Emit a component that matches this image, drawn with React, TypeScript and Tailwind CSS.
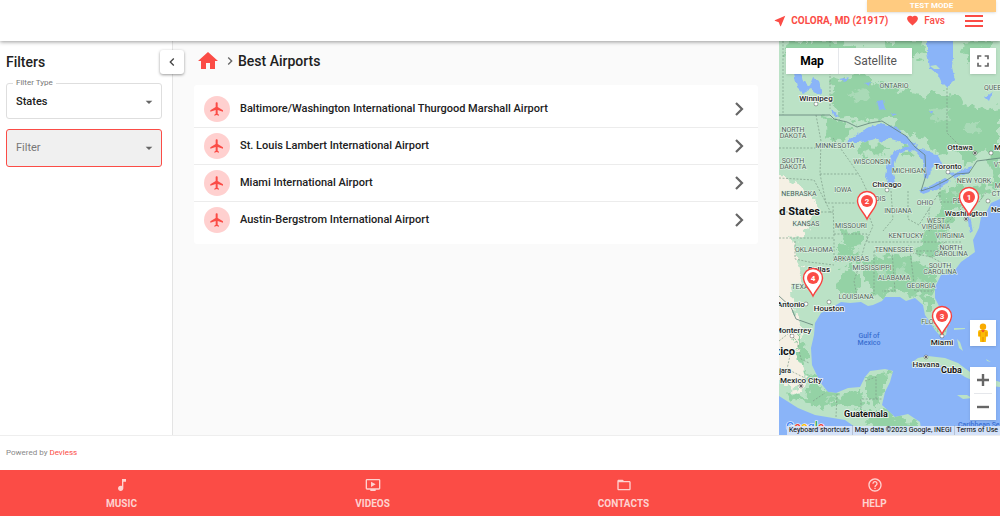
import { useState } from 'react';
import {
  MdArrowDropDown,
  MdChevronLeft,
  MdChevronRight,
  MdFavorite,
  MdFlight,
  MdFolderOpen,
  MdFullscreen,
  MdHelpOutline,
  MdHome,
  MdMusicNote,
  MdNearMe,
  MdOndemandVideo,
} from 'react-icons/md';

const airports = [
  'Baltimore/Washington International Thurgood Marshall Airport',
  'St. Louis Lambert International Airport',
  'Miami International Airport',
  'Austin-Bergstrom International Airport',
];

const navItems = [
  { label: 'MUSIC', Icon: MdMusicNote },
  { label: 'VIDEOS', Icon: MdOndemandVideo },
  { label: 'CONTACTS', Icon: MdFolderOpen },
  { label: 'HELP', Icon: MdHelpOutline },
];

const pins = [
  { id: 1, x: 190, y: 174 },
  { id: 2, x: 88, y: 178 },
  { id: 3, x: 163, y: 293 },
  { id: 4, x: 34, y: 255 },
];

const regions = [
  { name: 'ONTARIO', x: 115, y: 47 },
  { name: 'QUEBEC', x: 218, y: 49 },
  { name: 'NORTH', x: 14, y: 91 },
  { name: 'DAKOTA', x: 14, y: 97 },
  { name: 'MINNESOTA', x: 56, y: 107 },
  { name: 'WISCONSIN', x: 93, y: 123 },
  { name: 'SOUTH', x: 14, y: 122 },
  { name: 'DAKOTA', x: 14, y: 128 },
  { name: 'MICHIGAN', x: 130, y: 132 },
  { name: 'NEW YORK', x: 195, y: 142 },
  { name: 'VT', x: 219, y: 126 },
  { name: 'MA', x: 221, y: 147 },
  { name: 'CT', x: 217, y: 155 },
  { name: 'IOWA', x: 64, y: 151 },
  { name: 'NEBRASKA', x: 20, y: 155 },
  { name: 'OHIO', x: 146, y: 164 },
  { name: 'ILLINOIS', x: 93, y: 160 },
  { name: 'INDIANA', x: 119, y: 172 },
  { name: 'PENN', x: 183, y: 162 },
  { name: 'KANSAS', x: 27, y: 185 },
  { name: 'MISSOURI', x: 72, y: 187 },
  { name: 'WEST', x: 157, y: 182 },
  { name: 'VIRGINIA', x: 157, y: 188 },
  { name: 'KENTUCKY', x: 127, y: 197 },
  { name: 'VIRGINIA', x: 171, y: 197 },
  { name: 'OKLAHOMA', x: 35, y: 211 },
  { name: 'TENNESSEE', x: 115, y: 211 },
  { name: 'NORTH', x: 172, y: 209 },
  { name: 'CAROLINA', x: 172, y: 215 },
  { name: 'ARKANSAS', x: 72, y: 220 },
  { name: 'MISSISSIPPI', x: 93, y: 229 },
  { name: 'SOUTH', x: 161, y: 227 },
  { name: 'CAROLINA', x: 161, y: 233 },
  { name: 'ALABAMA', x: 115, y: 239 },
  { name: 'GEORGIA', x: 142, y: 247 },
  { name: 'TEXAS', x: 23, y: 248 },
  { name: 'LOUISIANA', x: 77, y: 258 },
  { name: 'FLORIDA', x: 156, y: 283 },
];

const cities = [
  { name: 'Winnipeg', x: 37, y: 60, dotX: 37, dotY: 63, capital: false },
  { name: 'Ottawa', x: 181, y: 109, dotX: 196, dotY: 112, capital: true },
  { name: 'Montreal', x: 231, y: 109, dotX: 212, dotY: 112, capital: false },
  { name: 'Toronto', x: 169, y: 128, dotX: 169, dotY: 131, capital: false },
  { name: 'Chicago', x: 108, y: 146, dotX: 108, dotY: 149, capital: false },
  { name: 'New York', x: 229, y: 171, dotX: 209, dotY: 160, capital: false },
  { name: 'Washington', x: 187, y: 175, dotX: 187, dotY: 178, capital: true },
  { name: 'Dallas', x: 40, y: 231, dotX: 31, dotY: 234, capital: false },
  { name: 'Antonio', x: 12, y: 266, dotX: 27, dotY: 263, capital: false },
  { name: 'Houston', x: 50, y: 270, dotX: 50, dotY: 261, capital: false },
  { name: 'Monterrey', x: 14, y: 292, dotX: 13, dotY: 295, capital: false },
  { name: 'Miami', x: 163, y: 304, dotX: 163, dotY: 295, capital: false },
  { name: 'Havana', x: 147, y: 326, dotX: 147, dotY: 316, capital: true },
  { name: 'Mexico City', x: 22, y: 342, dotX: 22, dotY: 345, capital: true },
];

const stateLines = [
  'M4 0 V74 M51 0 V68 M168 47 V92 L181 105',
  'M37 74 L42 100 L41 133 H80 M0 107 H41 M0 137 L35 139 L45 158 L52 172',
  'M41 133 L47 162 H77 M54 165 L55 195 M0 171 H54 M0 197 H55 V218',
  'M55 193 H88 V201 H182 M54 97 L72 122 L82 137 L88 150 L86 165 L94 185 L86 203',
  'M86 203 L80 225 L75 240 L78 255 M56 220 H82 M16 200 V218 L30 221 L55 224',
  'M112 150 L114 178 L104 190 M129 150 V178 L140 184 L150 168 L161 150',
  'M161 140 V161 H200 L208 150 M150 168 V190 L170 180 L184 166 M95 210 H166',
  'M95 210 V253 M113 210 L116 250 H103 M131 210 L136 250 H155 M166 201 L152 216 L176 229',
  'M152 216 L134 212 M0 300 L10 292 L18 300 L22 318 L30 322 M12 310 L8 328 L28 338 L41 341',
  'M86 340 L97 336 V358 H82 V375 M97 358 H103 M34 360 L46 352 M58 353 L57 376',
];

const forests = [
  'M52 40 L80 32 L100 42 L124 50 L146 55 L168 50 L190 62 L205 70 L221 68 V118 L205 108 L190 122 L176 110 L160 112 L148 100 L130 92 L112 80 L96 78 L80 80 L62 76 L54 66 Z',
  'M8 0 H60 L90 12 L72 20 L40 16 L14 26 L5 12 Z',
  'M102 0 H142 L145 14 L122 18 Z',
  'M180 2 L210 0 L214 18 L190 20 Z',
  'M41 76 L60 78 L76 86 L64 100 L50 96 L44 84 Z',
  'M78 103 L110 104 L104 116 L88 112 L80 116 Z',
  'M118 112 L128 106 L136 112 L130 118 Z',
  'M166 142 L186 146 L204 144 L210 152 L188 158 L174 172 L168 190 L150 206 L140 204 L150 184 L164 166 Z',
  'M212 100 L221 96 V152 L211 146 Z',
  'M60 188 L80 192 L86 202 L70 206 L62 200 Z',
  'M58 205 L76 206 L80 218 L64 220 L58 214 Z',
  'M62 226 L76 224 L80 244 L74 256 L60 250 Z',
  'M86 220 L112 214 L134 216 L146 226 L158 238 L152 252 L134 254 L110 250 L96 254 L86 240 Z',
  'M132 205 L152 200 L166 204 L152 216 L140 214 Z',
  'M142 252 L154 254 L154 268 L147 270 Z',
  'M156 284 L166 284 L165 293 L159 291 Z',
  'M20 292 L26 306 L28 322 L22 324 L16 304 Z',
  'M28 330 L44 346 L66 354 L84 350 L82 366 L60 362 L36 366 L14 358 L6 350 L30 356 Z',
  'M88 336 L110 332 L104 350 L98 366 L88 358 Z',
  'M78 368 L104 368 L122 380 L136 382 L130 394 L96 388 Z',
];

// lighter openings inside the wooded areas
const clearings = [
  'M70 52 L84 48 L92 56 L80 62 Z M150 70 L164 66 L170 76 L158 80 Z M184 84 L198 80 L202 90 L190 94 Z',
  'M98 226 L106 222 L108 236 L100 240 Z M118 226 L126 224 L130 234 L120 238 Z M138 236 L146 238 L142 246 Z',
  'M172 152 L182 150 L178 158 Z M156 188 L164 182 L162 192 Z M44 356 L56 356 L50 360 Z',
];

function RegionMap() {
  return (
    <svg
      className="absolute inset-0 size-full font-['Roboto',sans-serif]"
      viewBox="0 0 221 394"
      preserveAspectRatio="xMinYMin slice"
      role="img"
      aria-label="Map of airports"
    >
      <defs>
        <filter id="rough" x="-10%" y="-10%" width="120%" height="120%">
          <feTurbulence type="fractalNoise" baseFrequency="0.12" numOctaves="3" seed="4" result="n" />
          <feDisplacementMap in="SourceGraphic" in2="n" scale="18" xChannelSelector="R" yChannelSelector="G" />
        </filter>
        <filter id="coast" x="-5%" y="-5%" width="110%" height="110%">
          <feTurbulence type="fractalNoise" baseFrequency="0.2" numOctaves="2" seed="9" result="n" />
          <feDisplacementMap in="SourceGraphic" in2="n" scale="4" xChannelSelector="R" yChannelSelector="G" />
        </filter>
        <clipPath id="land">
          <path d="M0 0 H221 V158 L212 162 L208 170 L202 176 L200 187 L194 199 L196 211 L182 221 L176 229 L162 234 L156 246 L156 257 L162 269 L169 282 L167 294 L162 296 L156 289 L151 281 L146 274 L144 264 L136 257 L127 260 L121 256 L106 256 L103 260 L94 264 L89 265 L82 261 L71 262 L62 261 L54 266 L42 272 L36 282 L35 294 L32 307 L33 324 L41 341 L49 351 L57 352 L69 347 L81 346 L86 336 L91 330 L106 328 L114 330 L111 341 L106 351 L103 364 L116 376 L129 373 L141 381 L143 394 H109 L76 386 L66 379 L36 374 L19 367 L0 355 Z" />
        </clipPath>
      </defs>

      <rect width="221" height="394" fill="#8ab4f8" />
      <g clipPath="url(#land)">
        <rect width="221" height="394" fill="#bbe2c6" />
        <g filter="url(#rough)">
          <path
            d="M-10 138 L14 140 L26 150 L36 160 L40 172 L30 176 L28 190 L14 198 L18 216 L24 222 L20 242 L12 252 L14 272 L22 288 L24 306 L20 322 L28 336 L18 352 L4 340 L-10 340 Z"
            fill="#f5f0e4"
          />
          <g fill="#94d2a5">
            {forests.map((d) => (
              <path key={d} d={d} />
            ))}
          </g>
          <g fill="#a9dab7">
            {clearings.map((d) => (
              <path key={d} d={d} />
            ))}
          </g>
        </g>
      </g>

      <g fill="#8ab4f8" filter="url(#coast)">
        <path d="M148 -4 H174 V16 L173 26 L176 39 L168 47 L163 42 L159 34 L151 27 L148 12 Z" />
        <path d="M67 101 L79 92 L91 86 L102 82 L119 87 L127 96 L136 102 L134 106 L122 101 L109 97 L104 101 L96 98 L82 101 Z" />
        <path d="M112 149 L107 136 L109 119 L114 111 L124 107 L139 104 L136 109 L121 111 L117 119 L114 132 L116 142 Z" />
        <path d="M127 104 L146 109 L159 114 L164 126 L156 124 L151 129 L149 138 L145 136 L144 119 L137 111 Z" />
        <path d="M140 149 L149 146 L166 137 L172 140 L156 149 L144 153 Z" />
        <path d="M167 132 L179 131 L193 126 L191 132 L176 136 Z" />
        <path d="M15 32 L22 31 L24 40 L30 46 L34 36 L40 40 L43 54 L37 52 L32 48 L24 52 L18 46 Z" />
        <path d="M98 60 L104 59 L106 68 L100 69 Z M52 69 L58 72 L60 76 L54 74 Z M206 56 L214 50 L210 60 Z" />
        <path d="M110 72 L118 73 L114 75 Z M150 70 L154 70 L153 74 Z M60 38 L70 36 L66 40 Z M86 42 L91 41 L90 45 Z" />
        <path d="M188 176 L191 176 L194 190 L191 192 Z" />
      </g>
      <path d="M151 25 L157 24 L161 28 L155 28 Z" fill="#bbe2c6" />

      <g fill="#bbe2c6">
        <path d="M132 322 L139 317 L149 315 L166 317 L179 322 L191 331 L221 341 V346 L204 344 L186 336 L172 327 L159 324 L149 321 L139 325 Z" />
        <path d="M178 354 L188 354 L193 357 L184 358 Z" />
        <path d="M178 298 L181 301 L184 310 L180 307 Z M175 287 L186 287 L186 288 L175 289 Z M207 318 L212 321 L208 320 Z" />
      </g>

      <g fill="none" stroke="#7d9b87" strokeWidth="0.7" strokeDasharray="2 1.5">
        {stateLines.map((d) => (
          <path key={d} d={d} />
        ))}
      </g>
      <g fill="none" stroke="#5f7f77" strokeWidth="0.8">
        <path d="M0 74 H51 L55 78 L68 81 L78 86 L91 82 L103 80 L127 95 L136 106 L146 114 L147 134 L142 150 L154 146 L168 139 L177 133 L190 132 L198 120 L221 117" />
        <path d="M0 255 L12 266 L17 278 L34 284" />
      </g>

      <g fontSize="7" fill="#4f5f57" stroke="#e0f2e5" strokeWidth="1.2" paintOrder="stroke" textAnchor="middle">
        {regions.map((r) => (
          <text key={`${r.name}-${r.x}-${r.y}`} x={r.x} y={r.y}>
            {r.name}
          </text>
        ))}
      </g>
      <g fontSize="8" fontWeight="500" fill="#1f1f1f" stroke="#f1f8f3" strokeWidth="1.6" paintOrder="stroke" textAnchor="middle">
        {cities.map((c) => (
          <g key={c.name}>
            <circle cx={c.dotX} cy={c.dotY} r="1.8" fill="#fff" stroke="#333" strokeWidth="0.8" />
            {c.capital && <circle cx={c.dotX} cy={c.dotY} r="1" fill="#333" stroke="none" />}
            <text x={c.x} y={c.y}>
              {c.name}
            </text>
          </g>
        ))}
        <text x="12" y="332" fontSize="7" textAnchor="end">Guadalajara</text>
      </g>
      <g fontWeight="700" fill="#111" stroke="#f1f8f3" strokeWidth="1.6" paintOrder="stroke">
        <text x="41" y="174" fontSize="11" textAnchor="end">United States</text>
        <text x="16" y="314" fontSize="11" textAnchor="end">Mexico</text>
        <text x="162" y="332" fontSize="9">Cuba</text>
        <text x="65" y="376" fontSize="9">Guatemala</text>
      </g>
      <g fontSize="7" fontWeight="500" fill="#3a6fd0">
        <text x="90" y="297" textAnchor="middle">Gulf of</text>
        <text x="90" y="304" textAnchor="middle">Mexico</text>
        <text x="179" y="386">Caribbean Sea</text>
      </g>
      <text x="7" y="390" fontSize="12" fontWeight="500" stroke="#fff" strokeWidth="1.2" paintOrder="stroke">
        <tspan fill="#4285f4">G</tspan>
        <tspan fill="#ea4335">o</tspan>
        <tspan fill="#fbbc05">o</tspan>
        <tspan fill="#4285f4">g</tspan>
        <tspan fill="#34a853">l</tspan>
        <tspan fill="#ea4335">e</tspan>
      </text>

      {pins.map((pin) => (
        <g key={pin.id} transform={`translate(${pin.x} ${pin.y})`}>
          <path
            d="M0 0 C-3 -7 -9.500 -11 -9.500 -18 A9.500 9.500 0 0 1 9.500 -18 C9.500 -11 3 -7 0 0 Z"
            fill="#fff"
            stroke="#f8423f"
            strokeWidth="1.4"
          />
          <circle cy="-18" r="6" fill="#fb4c46" />
          <text y="-15" fontSize="8" fontWeight="700" fill="#fff" textAnchor="middle">
            {pin.id}
          </text>
        </g>
      ))}
    </svg>
  );
}

function MapPanel() {
  return (
    <section className="relative w-[221px] shrink-0 overflow-hidden bg-[#8ab4f8]">
      <RegionMap />
      <div className="absolute left-[7px] top-[7px] flex h-[26px] bg-white text-xs shadow-sm">
        <button className="w-[53px] border-r border-gray-200 font-bold text-black">Map</button>
        <button className="w-[73px] text-[#565656]">Satellite</button>
      </div>
      <button
        className="absolute right-1 top-[7px] flex size-[26px] items-center justify-center bg-white text-[#666] shadow-sm"
        aria-label="Toggle fullscreen view"
      >
        <MdFullscreen size={20} />
      </button>
      <button
        className="absolute bottom-[89px] right-1 flex size-[26px] items-center justify-center bg-white shadow-sm"
        aria-label="Drag Pegman onto the map to open Street View"
      >
        <svg width="12" height="20" viewBox="0 0 12 20">
          <path d="M3 7 H9 Q11 7 11 9 V13.500 H9.200 L8.800 19 H3.200 L2.800 13.500 H1 V9 Q1 7 3 7 Z" fill="#fbbc04" />
          <path d="M4 7.200 L6 9.500 L8 7.200 Z" fill="#ea4335" />
          <path d="M6 14 V19 M3 9 V13.500 M9 9 V13.500" stroke="#e37400" fill="none" strokeWidth="0.7" />
          <circle cx="6" cy="3.800" r="3.200" fill="#f9ab00" />
        </svg>
      </button>
      <div className="absolute bottom-[15px] right-1 flex w-[26px] flex-col bg-white text-[#666] shadow-sm">
        <button className="flex h-[26px] items-center justify-center" aria-label="Zoom in">
          <svg width="12" height="12" viewBox="0 0 12 12" stroke="currentColor" strokeWidth="2.400">
            <path d="M6 0 V12 M0 6 H12" />
          </svg>
        </button>
        <div className="mx-1 h-px bg-gray-200" />
        <button className="flex h-[26px] items-center justify-center" aria-label="Zoom out">
          <svg width="12" height="12" viewBox="0 0 12 12" stroke="currentColor" strokeWidth="2.400">
            <path d="M0 6 H12" />
          </svg>
        </button>
      </div>
      <div className="absolute bottom-0 right-0 flex h-[9px] items-center whitespace-nowrap bg-[#dbe7f8]/90 text-[7px] text-black">
        <button className="px-[2px]">Keyboard shortcuts</button>
        <span className="border-l border-gray-400/50 px-[2px]">Map data ©2023 Google, INEGI</span>
        <a href="#terms" className="border-l border-gray-400/50 px-[2px]">Terms of Use</a>
      </div>
    </section>
  );
}

function Sidebar() {
  const [filterType, setFilterType] = useState('States');
  const [filter, setFilter] = useState('');

  return (
    <aside className="relative w-[173px] shrink-0 border-r border-[#e4e4e4] bg-white pl-[6px] pr-[10px]">
      <h2 className="pt-[11px] text-sm leading-5 font-medium text-[#212121]">Filters</h2>
      <button
        className="absolute -right-3 top-[9px] z-10 flex size-6 items-center justify-center rounded-[3px] bg-white text-[#444] shadow-[0_1px_3px_rgba(0,0,0,0.4)]"
        aria-label="Collapse filters"
      >
        <MdChevronLeft size={16} />
      </button>

      <fieldset className="mt-[5px] h-[42px] rounded-[3px] border border-[#dedede] pl-[6px] pr-1">
        <legend className="px-[3px] text-[8px] leading-3 text-[#777]">
          <label htmlFor="filter-type">Filter Type</label>
        </legend>
        <div className="flex items-center">
          <select
            id="filter-type"
            value={filterType}
            onChange={(e) => setFilterType(e.target.value)}
            className="h-[26px] flex-1 appearance-none bg-transparent px-[3px] text-[11px] font-medium text-[#212121] outline-none"
          >
            <option>States</option>
            <option>Cities</option>
          </select>
          <MdArrowDropDown size={16} className="pointer-events-none -ml-4 text-[#666]" />
        </div>
      </fieldset>

      <div className="mt-[10px] flex h-[38px] items-center rounded-[3px] border border-[#fb4c46] bg-[#f0f0f0] pl-[6px] pr-1">
        <select
          aria-label="Filter"
          value={filter}
          onChange={(e) => setFilter(e.target.value)}
          className="h-[26px] flex-1 appearance-none bg-transparent px-[3px] text-[11px] text-[#777] outline-none"
        >
          <option value="">Filter</option>
          <option value="MD">Maryland</option>
          <option value="TX">Texas</option>
        </select>
        <MdArrowDropDown size={16} className="pointer-events-none -ml-4 text-[#666]" />
      </div>
    </aside>
  );
}

export default function App() {
  return (
    <div className="flex min-h-screen flex-col bg-white font-['Roboto',sans-serif] text-[#212121]">
      <header className="relative z-20 flex h-[41px] items-center justify-end bg-white pr-[17px] text-[#fb4c46] shadow-[0_1px_4px_rgba(0,0,0,0.4)]">
        <div className="absolute right-1 top-0 h-3 w-[129px] bg-[#ffcb80] text-center text-[8px] leading-[11px] font-bold text-white shadow-sm">
          TEST MODE
        </div>
        <a href="#location" className="flex items-center gap-1 text-[10px] font-bold">
          <MdNearMe size={14} />
          COLORA, MD (21917)
        </a>
        <a href="#favs" className="ml-[18px] flex items-center gap-[5px] text-[10px] font-medium">
          <MdFavorite size={13} />
          Favs
        </a>
        <button className="ml-5 flex w-[18px] flex-col gap-[3px]" aria-label="Open menu">
          <span className="h-[2px] w-full bg-[#fb4c46]" />
          <span className="h-[2px] w-full bg-[#fb4c46]" />
          <span className="h-[2px] w-full bg-[#fb4c46]" />
        </button>
      </header>

      <div className="flex flex-1 border-b border-[#eee]">
        <Sidebar />

        <main className="min-w-0 flex-1 bg-[#fafafa] px-[21px]">
          <nav className="flex h-10 items-center pl-[2px]">
            <a href="#home" aria-label="Home" className="text-[#fb4c46]">
              <MdHome size={24} />
            </a>
            <MdChevronRight size={16} className="ml-[2px] text-[#666]" />
            <h1 className="text-sm font-medium">Best Airports</h1>
          </nav>

          <ul className="mt-1 divide-y divide-[#ececec] rounded-[3px] bg-white py-[6px]">
            {airports.map((name) => (
              <li key={name}>
                <a href="#airport" className="flex h-9 items-center pl-[10px] pr-[13px]">
                  <span className="flex size-[26px] items-center justify-center rounded-full bg-[#ffd0cf] text-[#fb4c46]">
                    <MdFlight size={16} />
                  </span>
                  <span className="ml-[10px] flex-1 text-[11px] font-medium">{name}</span>
                  <svg width="12" height="14" viewBox="0 0 12 14" fill="none" stroke="#666" strokeWidth="2.200">
                    <path d="M3 1 L9 7 L3 13" />
                  </svg>
                </a>
              </li>
            ))}
          </ul>
        </main>

        <MapPanel />
      </div>

      <p className="flex h-[34px] items-center gap-[2px] px-[6px] text-[8px] text-[#888]">
        Powered by
        <a href="#devless" className="text-[#fb4c46]">Devless</a>
      </p>

      <nav className="bg-[#fb4c46]">
        <div className="-ml-1 grid h-[46px] grid-cols-4">
          {navItems.map(({ label, Icon }) => (
            <a
              key={label}
              href={`#${label.toLowerCase()}`}
              className="flex flex-col items-center pt-[7px] text-[10px] leading-3 font-bold text-white/75"
            >
              <Icon size={16} />
              <span className="mt-[5px]">{label}</span>
            </a>
          ))}
        </div>
      </nav>
    </div>
  );
}
